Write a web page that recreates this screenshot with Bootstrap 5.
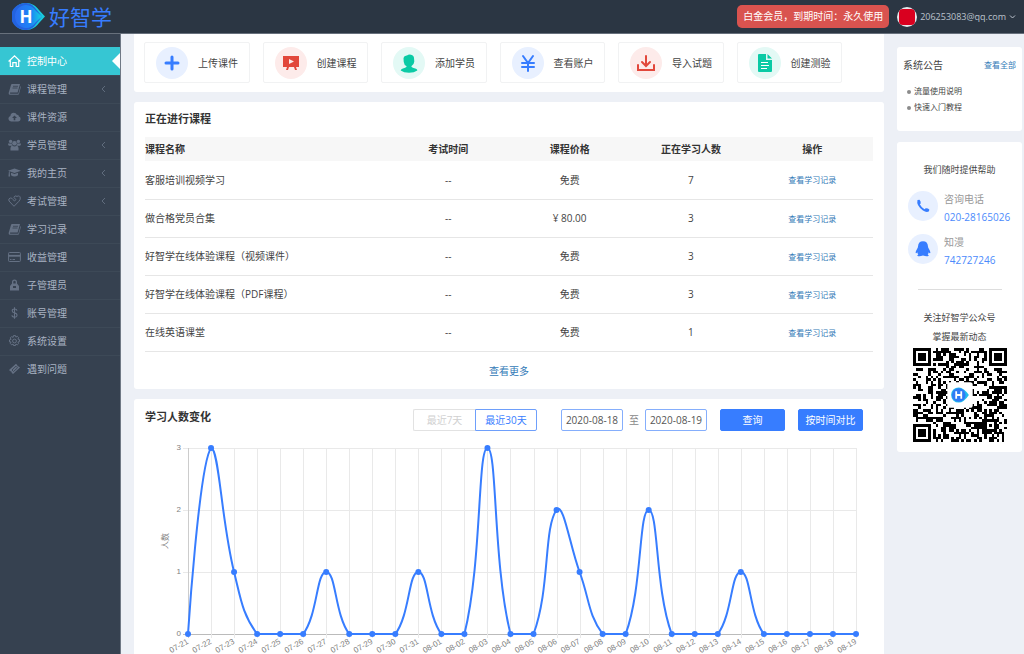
<!DOCTYPE html>
<html lang="zh-CN">
<head>
<meta charset="utf-8">
<meta name="viewport" content="width=device-width, initial-scale=1">
<title>好智学 - 控制中心</title>
<link href="https://cdn.jsdelivr.net/npm/bootstrap@5.3.0/dist/css/bootstrap.min.css" rel="stylesheet">
<style>
:root{--brand:#377dff;--lnk:#337ab7}
body{font-family:"Open Sans","Noto Sans CJK SC",sans-serif;font-size:10px;line-height:16px;color:#444;background:#edf0f6}
a{text-decoration:none;color:var(--lnk)}
.topbar{height:34px;background:#2b3643;border-bottom:1px solid #67707c}
.brand-text{font-size:21px;line-height:32px;color:var(--brand)}
.member-btn{height:23px;padding:0 6px;border:0;border-radius:5px;background:#d9534f;color:#fff;font-size:10px;line-height:23px}
.user-btn{border:0;background:none;padding:0;gap:3px;color:#bcc3cd;font-size:9px}
.avatar{width:20px;height:20px;border-radius:50%;background:#e6e9ec;display:flex;align-items:center;justify-content:center}
.avatar::before{content:"";width:16px;height:16px;border-radius:4px;background:#d9001f}
.shell{height:calc(100vh - 34px)}
.side{width:121px;background:#364150;padding-top:13px;border-right:1px solid #6f7885}
.side a{height:28px;padding:0 14px 2px 8px;gap:6px;color:#a9b3c3;border-top:1px solid #3d4957;position:relative}
.side svg{width:13px;height:12px;color:#657184;flex:none}
.side a .chev{width:5px;height:8px;margin-left:auto;color:#606c7d}
.side a.active{background:#36c6d3;color:#fff;border-color:#36c6d3}
.side a.active svg{color:#fff}
.side a.active::after{content:"";position:absolute;right:0;top:5px;border:8px solid transparent;border-right-color:#fff;border-left:0}
.page{gap:13px;padding:0 2px 0 13px;overflow-y:auto;scrollbar-width:none}
.page::-webkit-scrollbar{display:none}
.content-col{gap:10px;min-width:0}
.panel{background:#fff;border-radius:3px;padding:0 11px}
.tiles{display:grid;grid-template-columns:repeat(6,1fr);gap:13px;padding:8px 42px 9px 10px;border-radius:0 0 3px 3px}
.tile{height:41px;border:1px solid #f1f2f3;border-radius:2px;padding-left:11px;gap:10px;color:#444}
.disc{width:32px;height:32px;border-radius:50%;display:flex;align-items:center;justify-content:center;flex:none}
.disc-s{width:30px;height:30px;margin-top:1px}
.blue{background:#e8f0ff;color:var(--brand)}
.red{background:#fdebea;color:#e2473b}
.green{background:#e3f9f5;color:#0bcaa5}
.panel h2{font-size:11px;line-height:16px;font-weight:600;color:#333;margin:0}
.panel .list-title{padding:9px 0 10px}
.courses{table-layout:fixed;width:100%;text-align:center;color:#444}
.courses th{height:24px;background:#f7f7f7;font-weight:600;color:#333;padding:0}
.courses td{height:38px;padding:0;border-bottom:1px solid #e6e6e6}
.courses th:first-child,.courses td:first-child{width:33.333%;text-align:left}
.courses td a,.tiny{font-size:8px}
.more{padding:11px 0 10px}
.tools{padding:10px 10px 0 0}
.tools h2{align-self:flex-start}
.tools button,.tools input{height:22px;font-size:10px;line-height:20px;padding:0;text-align:center;background:#fff;border:1px solid #85aefc;border-radius:2px}
.tools input,.tools .seg{width:62px}
.tools input{color:#555}
.tools .seg{color:var(--brand);border-color:#6e9ffb;border-radius:0 2px 2px 0}
.tools .seg-off{color:#d0d0d0;border-color:#e2e2e2;border-right:0;border-radius:2px 0 0 2px}
.tools .go{width:65px;margin-left:13px;background:var(--brand);border-color:var(--brand);color:#fff}
.tools .to{width:22px;text-align:center;color:#888}
.chart{display:block;width:100%}
.chart text{font:8px "Liberation Sans","Noto Sans CJK SC",sans-serif;fill:#808080}
.aside{width:125px;flex:none;padding-top:13px;gap:11px}
.notice{padding:10px 6px 16px 6px}
.notice ul{list-style:none;margin:10px 0 0;padding:0 0 0 4px;font-size:8px}
.notice li::before{content:"";display:inline-block;width:4px;height:4px;border-radius:50%;background:#8b8b8b;margin-right:3px;vertical-align:middle}
.notice li a{color:#444}
.help{padding:18px 11px 10px;font-size:9px;line-height:19px}
.help-title{margin-bottom:11px}
.contact{gap:6px;margin-bottom:7px;font-size:10px;line-height:18px;color:#999}
.contact a{color:#4b8afc}
.rule{margin:20px 9px 18px 10px;border-top:1px solid #ddd}
.qr{display:block;width:94px;margin:2px auto 0 5px}
</style>
</head>
<body>
<header class="topbar d-flex align-items-center justify-content-between">
  <a href="#" class="d-flex align-items-center ps-2">
    <svg class="ms-1" width="37" height="30" viewBox="0 0 37 30">
      <defs><linearGradient id="lg"><stop offset="0" stop-color="#2b6af0"/><stop offset=".6" stop-color="#1c86f6"/><stop offset="1" stop-color="#16d3dc"/></linearGradient></defs>
      <path d="M14 1C6 1 0 7 0 14.500S6 28 14 28C20 28 24 25 27 21L33 14.500 27 8C24 4 20 1 14 1Z" fill="#19cbdc"/>
      <path d="M13 1C6 1 -1 7 -1 14.500S6 28 13 28C18 28 21 26 24 22L30 14.500 24 7C21 3 18 1 13 1Z" fill="#2363df"/>
      <path d="M14 3C8 3 3 8 3 14.500S8 26 14 26C18 26 21 24 24 20L30 14.500 24 9C21 5 18 3 14 3Z" fill="url(#lg)"/>
      <text x="14" y="21" text-anchor="middle" font-family="Open Sans, sans-serif" font-weight="700" font-size="17" fill="#fff">H</text>
    </svg>
    <span class="brand-text">好智学</span>
  </a>
  <div class="d-flex align-items-center pe-2 gap-2">
    <button type="button" class="member-btn">白金会员，到期时间：永久使用</button>
    <button type="button" class="user-btn d-flex align-items-center"><span class="avatar"></span>206253083@qq.com
      <svg width="7" height="6" viewBox="0 0 7 6" fill="none" stroke="#bcc3cd"><path d="M1 1.500 3.500 4 6 1.500"/></svg></button>
  </div>
</header>

<svg class="d-none">
  <symbol id="i-book" viewBox="0 0 13 12"><path fill="currentColor" d="M4 1h8l-2.400 8.500H2.300q-.8.900.2 1.200h7.800L12.500 3q.6.600.3 1.300L11 11q-.2.800-1 .800H2q-1.800-.3-1.200-2.300L3 2q.3-.8 1-1Z"/><path stroke="#364150" stroke-width=".8" d="M5 3.300h5M4.500 5h5"/></symbol>
  <symbol id="i-chev" viewBox="0 0 5 8"><path d="M4 1 1 4l3 3" fill="none" stroke="currentColor"/></symbol>
</svg>

<div class="shell d-flex">
  <nav class="side d-flex flex-column flex-shrink-0" aria-label="主菜单">
    <a href="#" class="active d-flex align-items-center"><svg viewBox="0 0 13 12" fill="none" stroke="currentColor" stroke-width="1.200"><path d="M.6 6.500 6.500.9l5.900 5.600M2.300 5.500v6h2.500V7.700h3.400v3.800h2.500v-6"/></svg>控制中心</a>
    <a href="#" class="d-flex align-items-center"><svg><use href="#i-book"/></svg>课程管理<svg class="chev"><use href="#i-chev"/></svg></a>
    <a href="#" class="d-flex align-items-center"><svg viewBox="0 0 13 12"><path fill="currentColor" d="M3 10.500Q.4 10 .4 7.700.4 5.700 2.400 5.100 2.500 1.900 5.700 1.700q2.300 0 3.200 2.100 2-.2 2 1.800 1.700.5 1.700 2.400 0 2.200-2.400 2.500Z"/><path fill="#364150" d="M6.500 4.500 9 7H7.300v2.200H5.700V7H4Z"/></svg>课件资源</a>
    <a href="#" class="d-flex align-items-center"><svg viewBox="0 0 13 12" fill="currentColor"><circle cx="2.600" cy="2.400" r="1.700"/><circle cx="10.400" cy="2.400" r="1.700"/><circle cx="6.500" cy="4.200" r="2.300"/><path d="M0 4.500h3.700q0 1.500 1 2.300H1Q0 6.500 0 4.500M13 4.500H9.300q0 1.500-1 2.300H12q1-.3 1-2.300M2.500 11.500Q2 7 4.500 6.800q2 1.500 4 0Q11 7 10.500 11.500Z"/></svg>学员管理<svg class="chev"><use href="#i-chev"/></svg></a>
    <a href="#" class="d-flex align-items-center"><svg viewBox="0 0 13 12" fill="currentColor"><path d="M0 3.700 6.500 1.500 13 3.700 6.500 6ZM3 5.700l3.500 1.300L10 5.700v2.500q-3.500 2.400-7 0ZM.9 4.500h.8l.3 5H.5Z"/></svg>我的主页<svg class="chev"><use href="#i-chev"/></svg></a>
    <a href="#" class="d-flex align-items-center"><svg viewBox="0 0 13 12" fill="none" stroke="currentColor"><path d="M6 11.300 1 6Q0 3.500 2.400 3q1.500-.3 2.500 1.500L6.500 6 8 4.500 5.800 2.500Q7-.2 9 1.400q3-1.400 3.300 1.500.2 1.500-1.400 3.400Z"/></svg>考试管理<svg class="chev"><use href="#i-chev"/></svg></a>
    <a href="#" class="d-flex align-items-center"><svg><use href="#i-book"/></svg>学习记录</a>
    <a href="#" class="d-flex align-items-center"><svg viewBox="0 0 13 12" fill="none" stroke="currentColor"><rect x=".6" y="1.500" width="11.800" height="9" rx=".8"/><path stroke-width="1.800" d="M.6 4.800h11.800"/><path d="M2 8.500h1.500M4.500 8.500h2.500"/></svg>收益管理</a>
    <a href="#" class="d-flex align-items-center"><svg viewBox="0 0 13 12" fill="currentColor"><path fill-rule="evenodd" d="M4 4.500V3a2.500 2.500 0 0 1 5 0v1.500l2 2.500v4.500H2V7Zm1.300 0h2.400V3a1.200 1.200 0 0 0-2.400 0ZM5 7v2h3V7Z"/></svg>子管理员</a>
    <a href="#" class="d-flex align-items-center"><svg viewBox="0 0 13 12" fill="none" stroke="currentColor" stroke-width="1.100"><path d="M9 3.700Q8.800 2 6.500 2T4.200 3.700Q4.200 5.400 6.500 5.800 9 6.300 9 8.200T6.500 10 4 8.200M6.500.3v11.500"/></svg>账号管理</a>
    <a href="#" class="d-flex align-items-center"><svg viewBox="0 0 13 12" fill="none" stroke="currentColor"><circle cx="6.500" cy="6" r="1.900"/><path d="m5.500.6 2 0 .4 1.500 1.400-.8 1.400 1.400-.8 1.400 1.600.5v2l-1.600.4.800 1.500-1.400 1.300-1.400-.8-.4 1.500h-2l-.4-1.500-1.500.8-1.300-1.400.8-1.400L1.500 6.900v-2l1.600-.5-.8-1.500 1.300-1.300 1.500.8Z"/></svg>系统设置</a>
    <a href="#" class="d-flex align-items-center"><svg viewBox="0 0 13 12"><path fill="currentColor" d="M1 7 8 .8l1.300 1.400q.2 1.300 1.500 1.200l1.200 1.200L5 11 3.700 9.700Q3.700 8.300 2.300 8.300Z"/><path d="m4 7 4-3.800 1.500 1.600-4 3.700Z" fill="none" stroke="#364150" stroke-width=".8"/></svg>遇到问题</a>
  </nav>

  <div class="page d-flex flex-grow-1 align-items-start">
    <main class="content-col flex-grow-1 d-flex flex-column">
      <section class="panel tiles">
        <a href="#" class="tile d-flex align-items-center"><span class="disc blue"><svg width="16" height="16" stroke="currentColor" stroke-width="3" stroke-linecap="round"><path d="M8 2v12M2 8h12"/></svg></span>上传课件</a>
        <a href="#" class="tile d-flex align-items-center"><span class="disc red"><svg width="16" height="16" fill="currentColor"><path fill-rule="evenodd" d="M0 1h16v11h-3l1 3h-2l-1-3H6l-1 3H3l1-3H0Zm6 3v5l5-2.500Z"/></svg></span>创建课程</a>
        <a href="#" class="tile d-flex align-items-center"><span class="disc green"><svg width="18" height="20" fill="currentColor"><path d="M3.500 5Q4 2.300 7 2.500q1.500-1.300 4-.8 3 .8 3 3.300l.3 3.500Q14 12 11.300 13.300q.2 1.200 2.200 1.700 4 .8 3.800 2.500-3 2.300-8.300 2.300T.7 17.500Q1 15.700 4.500 15q2-.5 2.200-1.700Q4 12 3.700 8.700Z"/></svg></span>添加学员</a>
        <a href="#" class="tile d-flex align-items-center"><span class="disc blue"><svg width="16" height="18" fill="none" stroke="currentColor" stroke-width="2" stroke-linecap="round"><path d="M3 2 8 9l5-7M8 9v8M2 9h12M2 13h12"/></svg></span>查看账户</a>
        <a href="#" class="tile d-flex align-items-center"><span class="disc red"><svg width="18" height="18" fill="none" stroke="currentColor" stroke-width="2" stroke-linecap="round"><path d="M9 2v9M5 8l4 4 4-4M1 11v5h16v-5"/></svg></span>导入试题</a>
        <a href="#" class="tile d-flex align-items-center"><span class="disc green"><svg width="14" height="18" fill="currentColor"><path d="M1 0h7v6h6v11q0 1-1 1H1q-1 0-1-1V1q0-1 1-1ZM9.500 0 14 4.500H9.500Z"/><path stroke="#fff" d="M3 8.500h7M3 11.500h8M3 14.500h6"/></svg></span>创建测验</a>
      </section>

      <section class="panel">
        <h2 class="list-title">正在进行课程</h2>
        <table class="courses">
          <thead><tr><th>课程名称</th><th>考试时间</th><th>课程价格</th><th>正在学习人数</th><th>操作</th></tr></thead>
          <tbody>
            <tr><td>客服培训视频学习</td><td>--</td><td>免费</td><td>7</td><td><a href="#">查看学习记录</a></td></tr>
            <tr><td>做合格党员合集</td><td>--</td><td>¥ 80.00</td><td>3</td><td><a href="#">查看学习记录</a></td></tr>
            <tr><td>好智学在线体验课程（视频课件）</td><td>--</td><td>免费</td><td>3</td><td><a href="#">查看学习记录</a></td></tr>
            <tr><td>好智学在线体验课程（PDF课程）</td><td>--</td><td>免费</td><td>3</td><td><a href="#">查看学习记录</a></td></tr>
            <tr><td>在线英语课堂</td><td>--</td><td>免费</td><td>1</td><td><a href="#">查看学习记录</a></td></tr>
          </tbody>
        </table>
        <div class="more text-center"><a href="#">查看更多</a></div>
      </section>

      <section class="panel">
        <div class="tools d-flex align-items-center">
          <h2 class="me-auto">学习人数变化</h2>
          <button type="button" class="seg seg-off">最近7天</button><button type="button" class="seg">最近30天</button>
          <input type="text" class="ms-4" value="2020-08-18" aria-label="开始日期">
          <span class="to">至</span>
          <input type="text" value="2020-08-19" aria-label="结束日期">
          <button type="button" class="go">查询</button>
          <button type="button" class="go">按时间对比</button>
        </div>
        <svg class="chart" id="chart" viewBox="0 0 728 234" role="img" aria-label="学习人数变化"></svg>
      </section>
    </main>

    <aside class="aside d-flex flex-column">
      <section class="panel notice">
        <div class="d-flex justify-content-between align-items-center"><span>系统公告</span><a href="#" class="tiny">查看全部</a></div>
        <ul><li><a href="#">流量使用说明</a></li><li><a href="#">快速入门教程</a></li></ul>
      </section>
      <section class="panel help">
        <div class="help-title text-center">我们随时提供帮助</div>
        <div class="contact d-flex align-items-start"><span class="disc disc-s blue"><svg width="14" height="14" fill="currentColor"><path d="M1.500 1 3.500.7Q5 2.500 4.700 4.500L3.800 5.300Q5.500 8.700 8.500 10.200L9.700 9.300q2.200-.2 3.600 1.200L13 12.300Q10.500 14 7 11.500 0 6.500 1.500 1Z"/></svg></span>
          <div>咨询电话<br><a href="tel:020-28165026">020-28165026</a></div></div>
        <div class="contact d-flex align-items-start"><span class="disc disc-s blue"><svg width="16" height="16" fill="currentColor"><path d="M3 5.500Q3.300.3 8 .3t5 5.200q0 1.200.7 2 2 3.300 1.600 4.500-.7.500-1.600-.8-.2 1.400-1 2.200 1.300.7.900 1.400Q12 16 8 14.600 4 16 2.400 14.800q-.4-.7.900-1.400-.8-.8-1-2.200Q1.400 12.500.7 12q-.4-1.200 1.600-4.500.7-.8.700-2Z"/></svg></span>
          <div>知漫<br><a href="#">742727246</a></div></div>
        <div class="rule"></div>
        <div class="text-center">关注好智学公众号<br>掌握最新动态</div>
        <svg class="qr" id="qr" viewBox="0 0 37 37" role="img" aria-label="公众号二维码" shape-rendering="crispEdges"></svg>
      </section>
    </aside>
  </div>
</div>

<script>
(function () {
  // Daily learner counts, 07-21 to 08-19
  var vals = [0,3,1,0,0,0,1,0,0,0,1,0,0,3,0,0,2,1,0,0,2,0,0,0,1,0,0,0,0,0];
  var x0 = 43, x1 = 711, base = 203, unit = 62, step = (x1 - x0) / 29, k = .43, out = '', i;
  var pts = vals.map(function (v, i) { return [x0 + i * step, base - v * unit]; });
  for (i = 0; i < 4; i++) out += '<path d="M' + (x0 - 5) + ' ' + (base - i * unit) + 'H' + x1 + '" stroke="' + (i ? '#e9e9e9' : '#bbb') + '" shape-rendering="crispEdges"/><text x="36" y="' + (base - i * unit + 2) + '" text-anchor="end">' + i + '</text>';
  pts.forEach(function (p, i) {
    var d = new Date(2020, 6, 21 + i), t = ('0' + (d.getMonth() + 1)).slice(-2) + '-' + ('0' + d.getDate()).slice(-2);
    out += '<path d="M' + Math.round(p[0]) + ' 17V' + (base + 4) + '" stroke="' + (i ? '#e9e9e9' : '#ccc') + '" shape-rendering="crispEdges"/>';
    out += '<text text-anchor="end" transform="translate(' + (p[0] + 1) + ' 212) rotate(-30)">' + t + '</text>';
  });
  out += '<text text-anchor="middle" transform="translate(23 110) rotate(-90)">人数</text>';
  // Smooth curve; control points stay inside the value range
  var clamp = function (y) { return Math.min(base, Math.max(17, y)); };
  var path = 'M' + pts[0], c0 = pts[0];
  for (i = 1; i < pts.length; i++) {
    var p = pts[i], a = pts[i - 1], b = pts[i + 1] || p;
    var la = Math.hypot(p[0] - a[0], p[1] - a[1]), lb = Math.hypot(p[0] - b[0], p[1] - b[1]);
    var r = lb / (la + lb), vx = b[0] - a[0], vy = b[1] - a[1];
    var c1 = i === 29 ? p : [p[0] - vx * k * (1 - r), clamp(p[1] - vy * k * (1 - r))];
    path += 'C' + c0 + ' ' + c1 + ' ' + p;
    c0 = [p[0] + vx * k * r, clamp(p[1] + vy * k * r)];
  }
  out += '<path d="' + path + '" fill="none" stroke="#377dff" stroke-width="2"/>';
  pts.forEach(function (p) { out += '<circle cx="' + p[0] + '" cy="' + p[1] + '" r="3" fill="#377dff"/>'; });
  document.getElementById('chart').innerHTML = out;

  // QR code: data modules, then finder and alignment squares, then the logo
  var n = 37, seed = 2020, q = '', x, y;
  for (y = 0; y < n; y++) for (x = 0; x < n; x++) {
    seed = (seed * 1103515245 + 12345) % 2147483648;
    if ((x < 8 && (y < 8 || y > 28)) || (x > 28 && y < 8)) continue;
    if (seed / 2147483648 > .5) q += 'M' + x + ' ' + y + 'h1v1h-1Z';
  }
  var s = '<path d="' + q + '"/>';
  [[0,0,7],[30,0,7],[0,30,7],[28,28,5]].forEach(function (f) {
    s += '<rect x="' + f[0] + '" y="' + f[1] + '" width="' + f[2] + '" height="' + f[2] + '"/><rect x="' + (f[0]+1) + '" y="' + (f[1]+1) + '" width="' + (f[2]-2) + '" height="' + (f[2]-2) + '" fill="#fff"/><rect x="' + (f[0]+2) + '" y="' + (f[1]+2) + '" width="' + (f[2]-4) + '" height="' + (f[2]-4) + '"/>';
  });
  s += '<g shape-rendering="auto"><rect x="13.500" y="13.500" width="10" height="10" rx="1" fill="#fff"/><path d="M18 15.500a3 3 0 1 0 0 6Q20 21.500 22 18.500 20 15.500 18 15.500Z" fill="#22bdec"/><circle cx="18" cy="18.500" r="2.700" fill="#2f7bf5"/><path d="M17 17v3M19 17v3M17 18.500h2" stroke="#fff" stroke-width=".7"/></g>';
  document.getElementById('qr').innerHTML = s;
})();
</script>
<script src="https://cdn.jsdelivr.net/npm/bootstrap@5.3.0/dist/js/bootstrap.bundle.min.js"></script>
</body>
</html>
